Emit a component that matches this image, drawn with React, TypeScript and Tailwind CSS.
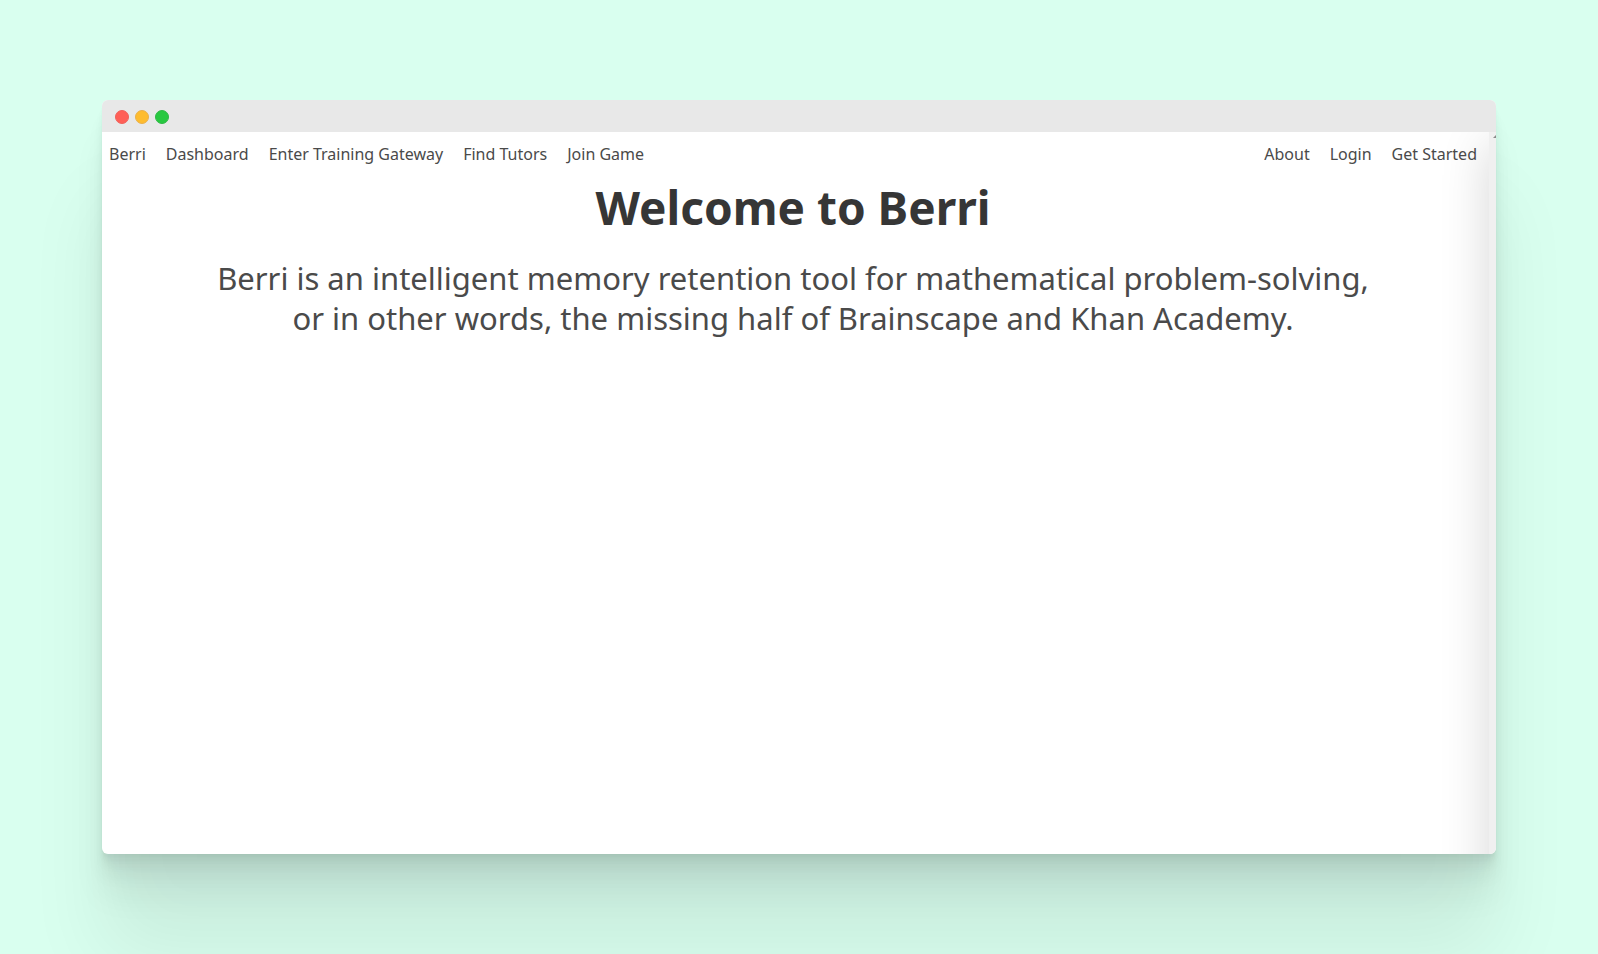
const leftLinks = ["Berri", "Dashboard", "Enter Training Gateway", "Find Tutors", "Join Game"];
const rightLinks = ["About", "Login", "Get Started"];

function NavLinks({ items }: { items: string[] }) {
  return (
    <ul className="flex gap-5">
      {items.map((item) => (
        <li key={item}>
          <a href="#" className="whitespace-nowrap">
            {item}
          </a>
        </li>
      ))}
    </ul>
  );
}

function TitleBar() {
  return (
    <div className="flex h-8 items-center gap-[6px] bg-[#e8e8e8] px-[13px] pt-[2px]">
      <span className="size-[14px] rounded-full border border-[#f0605a] bg-[#ff5f57]" />
      <span className="size-[14px] rounded-full border border-[#eab04a] bg-[#febc2e]" />
      <span className="size-[14px] rounded-full border border-[#2fb845] bg-[#28c840]" />
    </div>
  );
}

export default function App() {
  return (
    <div className="flex min-h-screen flex-col overflow-hidden bg-[#d9ffef] px-[102px] py-[100px] font-['Noto_Sans',sans-serif] text-[#4a4a4a]">
      <div className="flex flex-1 flex-col overflow-hidden rounded-md bg-white shadow-[0_3px_2px_rgba(0,0,0,0.02),0_7px_5px_rgba(0,0,0,0.028),0_12px_10px_rgba(0,0,0,0.035),0_22px_18px_rgba(0,0,0,0.042),0_42px_33px_rgba(0,0,0,0.05),0_100px_80px_rgba(0,0,0,0.07)]">
        <TitleBar />
        <div className="relative flex flex-1 overflow-hidden">
          <div className="flex-1 pl-[7px] pr-[19px]">
            <nav className="relative z-10 flex h-11 items-center justify-between text-base leading-6">
              <NavLinks items={leftLinks} />
              <NavLinks items={rightLinks} />
            </nav>
            <main className="text-center">
              <h1 className="pt-1 text-[46px] leading-[54px] font-bold text-[#363636]">Welcome to Berri</h1>
              <p className="mx-auto mt-6 max-w-[1180px] text-[31px] leading-10">
                Berri is an intelligent memory retention tool for mathematical problem-solving,
                <br />
                or in other words, the missing half of Brainscape and Khan Academy.
              </p>
            </main>
          </div>
          <div className="pointer-events-none absolute top-0 -right-[73px] -bottom-16 w-20 bg-[#f0f0f0] shadow-[0_10px_50px_rgba(0,0,0,0.16)]" />
          <svg className="absolute top-[3px] right-0" width="3" height="3" viewBox="0 0 3 3" aria-hidden="true">
            <path d="M3 0V3H0Z" fill="#8a8a8a" />
          </svg>
        </div>
      </div>
    </div>
  );
}
